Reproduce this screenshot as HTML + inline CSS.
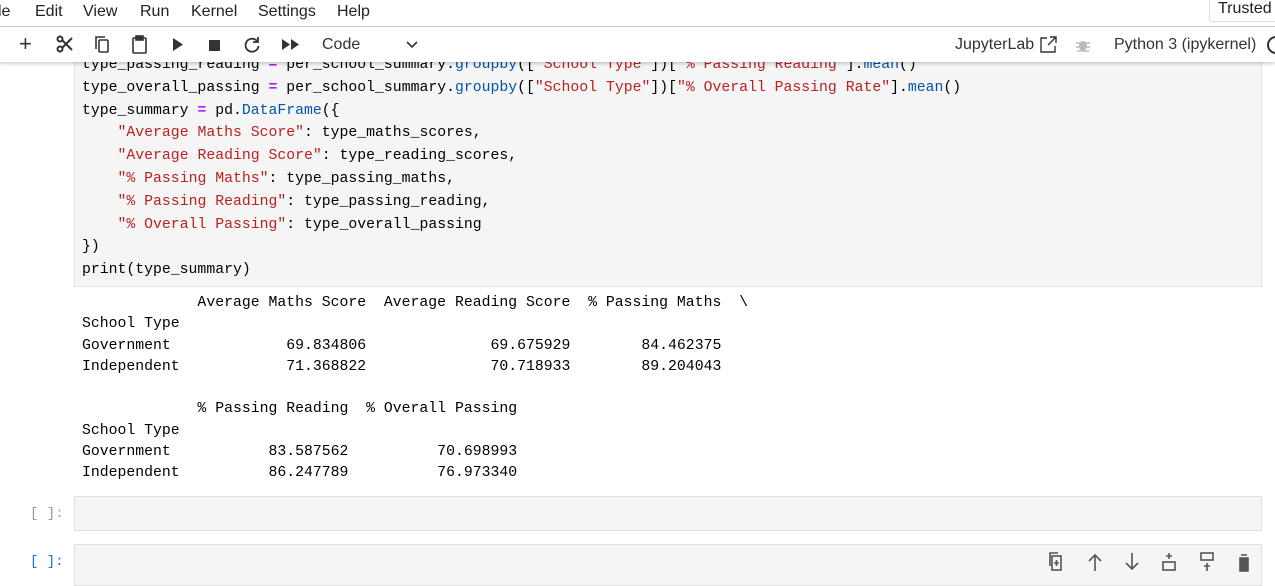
<!DOCTYPE html>
<html><head><style>
body{margin:0;width:1275px;height:575px;overflow:hidden;background:#fff;font-family:"Liberation Sans",sans-serif;position:relative}
.menu{position:absolute;top:0;left:0;width:1275px;height:26px;border-bottom:1px solid #c8c8c8;font-size:16px;color:#222}
.menu span{position:absolute;top:3px}
.trusted{position:absolute;left:1209px;top:-2px;width:80px;height:22px;border:1px solid #ddd;border-radius:3px;font-size:16px;padding-left:8px;line-height:20px}
.tb{position:absolute;top:27px;left:0;width:1275px;height:35px;background:#fff;box-shadow:0 2px 3px rgba(0,0,0,.18);z-index:2;font-size:16px;color:#333}
.tb .i{position:absolute;top:8px}
.mono{font-family:"Liberation Mono",monospace;font-size:14.8px;white-space:pre}
.cell{position:absolute;left:74px;width:1186px;background:#f5f5f5;border:1px solid #e0e0e0}
.k{color:#aa22ff;font-weight:bold}.s{color:#ba2121}.m{color:#0055aa}.p{color:#000}
.prompt{position:absolute;left:30px;font-family:"Liberation Mono",monospace;font-size:14px;color:#999}
</style></head><body>
<div class="menu">
<span style="left:-2px">le</span><span style="left:35px">Edit</span><span style="left:83px">View</span><span style="left:140px">Run</span><span style="left:191px">Kernel</span><span style="left:258px">Settings</span><span style="left:337px">Help</span>
<div class="trusted">Trusted</div>
</div>
<div class="tb">
<span class="i" style="left:19px;top:4px;font-size:22px">+</span>
<svg class="i" style="left:56px" width="18" height="18" viewBox="0 0 18 18" fill="none" stroke="#333" stroke-width="2"><circle cx="4" cy="4" r="2.5"/><circle cx="4" cy="14" r="2.5"/><path d="M6 5L16 15M6 13L16 3"/></svg>
<svg class="i" style="left:93px" width="18" height="19" viewBox="0 0 18 19" fill="none" stroke="#333" stroke-width="1.6"><path d="M3 14V2h9"/><rect x="6" y="5" width="9" height="12" rx="1"/></svg>
<svg class="i" style="left:131px" width="18" height="19" viewBox="0 0 18 19" fill="none" stroke="#333" stroke-width="1.6"><rect x="2" y="3" width="13" height="15" rx="1"/><rect x="5" y="1" width="7" height="4" fill="#333"/></svg>
<svg class="i" style="left:172px;top:11px" width="12" height="14"><path d="M1 0L11 6.5L1 13Z" fill="#333"/></svg>
<div style="position:absolute;left:209px;top:13px;width:11px;height:11px;background:#333"></div>
<svg class="i" style="left:243px;top:9px" width="18" height="18" fill="none" stroke="#333" stroke-width="1.8"><path d="M14 5A6.5 6.5 0 1 0 15.5 10"/><path d="M15 1v5h-5" /></svg>
<svg class="i" style="left:282px;top:12px" width="18" height="11"><path d="M0 0L8 5.5L0 11ZM9 0L17 5.5L9 11Z" fill="#333"/></svg>
<span class="i" style="left:322px;top:9px">Code</span>
<svg class="i" style="left:406px;top:14px" width="12" height="8" fill="none" stroke="#333" stroke-width="1.6"><path d="M1 1L6 6L11 1"/></svg>
<span class="i" style="left:955px;top:9px">JupyterLab</span>
<svg class="i" style="left:1040px;top:9px" width="17" height="17" fill="none" stroke="#333" stroke-width="1.4"><path d="M7 2H1v14h14v-6M10 1h6v6M16 1L8 9"/></svg>
<svg class="i" style="left:1076px;top:11px" width="14" height="14"><ellipse cx="7" cy="8" rx="4" ry="5" fill="#bbb"/><path d="M0 5h14M0 9h14M1 13h12" stroke="#bbb" stroke-width="1.5"/></svg>
<span class="i" style="left:1114px;top:9px">Python 3 (ipykernel)</span>
<div style="position:absolute;left:1267px;top:9px;width:14px;height:14px;border:2px solid #333;border-radius:50%"></div>
</div>
<div class="cell" style="top:40px;height:245px"></div>
<div class="mono" style="position:absolute;left:82px;top:54px;line-height:22.8px"><span class="p">type_passing_reading </span><span class="k">=</span> per_school_summary.<span class="m">groupby</span>([<span class="s">"School Type"</span>])[<span class="s">"% Passing Reading"</span>].<span class="m">mean</span>()
type_overall_passing <span class="k">=</span> per_school_summary.<span class="m">groupby</span>([<span class="s">"School Type"</span>])[<span class="s">"% Overall Passing Rate"</span>].<span class="m">mean</span>()
type_summary <span class="k">=</span> pd.<span class="m">DataFrame</span>({
    <span class="s">"Average Maths Score"</span>: type_maths_scores,
    <span class="s">"Average Reading Score"</span>: type_reading_scores,
    <span class="s">"% Passing Maths"</span>: type_passing_maths,
    <span class="s">"% Passing Reading"</span>: type_passing_reading,
    <span class="s">"% Overall Passing"</span>: type_overall_passing
})
print(type_summary)</div>
<div class="mono" style="position:absolute;left:82px;top:293px;line-height:21.3px;color:#000">             Average Maths Score  Average Reading Score  % Passing Maths  \
School Type
Government             69.834806              69.675929        84.462375
Independent            71.368822              70.718933        89.204043

             % Passing Reading  % Overall Passing
School Type
Government           83.587562          70.698993
Independent          86.247789          76.973340</div>
<div class="prompt" style="top:506px">[ ]:</div>
<div class="cell" style="top:496px;height:33px"></div>
<div class="prompt" style="top:554px;color:#1976d2">[ ]:</div>
<div class="cell" style="top:544px;height:40px"></div>
<svg style="position:absolute;left:1048px;top:552px" width="210" height="20" fill="none" stroke="#555" stroke-width="1.6">
<rect x="4" y="4" width="9" height="14"/><path d="M2 14V1h8M8.5 8v6M6 11h5"/>
<path d="M47 19V3M41 9l6-6 6 6"/>
<path d="M84 1v16M78 11l6 6 6-6"/>
<path d="M121 1v6M118 4h6"/><rect x="115" y="10" width="12" height="8"/>
<rect x="153" y="1" width="12" height="7"/><path d="M159 11v8M156 14h6"/>
<path d="M192 6h8v13h-8zM193 3h6" fill="#555"/>
</svg>
</body></html>
